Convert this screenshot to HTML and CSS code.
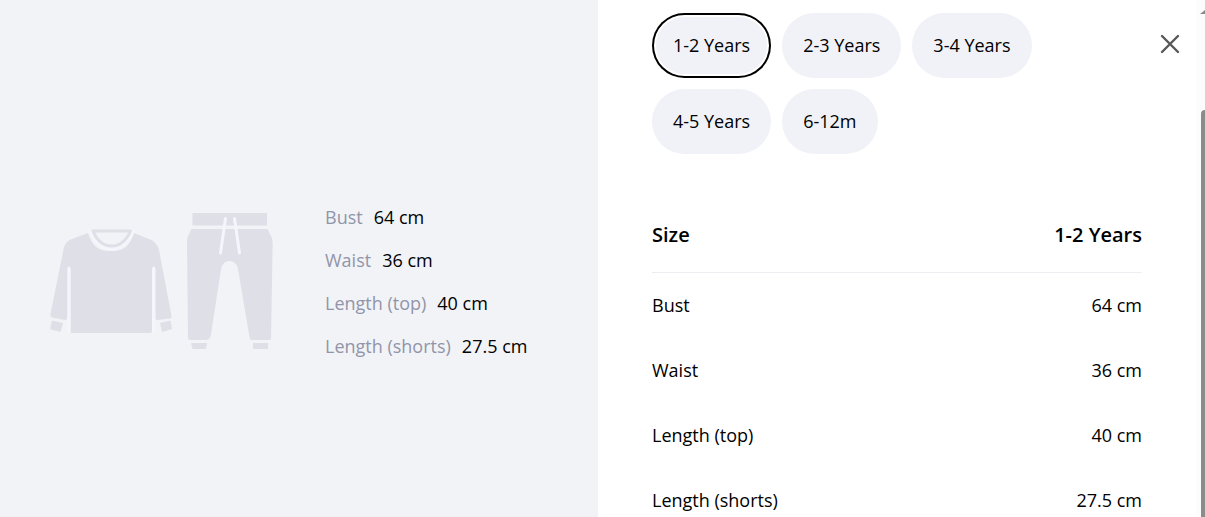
FILE: index.html
```html
<!DOCTYPE html>
<html lang="en">
<head>
<meta charset="utf-8">
<meta name="viewport" content="width=device-width, initial-scale=1">
<title>Size guide</title>
<link rel="stylesheet" href="styles.css">
</head>
<body>
<main class="guide">
  <section class="summary" aria-label="Measurements">
    <svg class="outfit" viewBox="50 212 223 138" aria-hidden="true">
      <!-- sweater -->
      <path class="fill" d="M88 233 C93 249 101 251 111 251 C121 251 129 249 134 233 L149 239 Q157 242 159 250 L171.500 316 Q172 318 170 318.500 L157 320 Q155.500 320 155.500 318 V269 Q154 267 152 269 V331 Q152 333 150 333 H72 Q70.500 333 70.500 331 V269 Q69 267 67.500 269 V317 Q67 320 65 320 L52 317.500 Q50 317 50.500 314 L64 247 Q66 241 72 239 Z"/>
      <path class="halo" d="M90.500 232 Q98 249 111 249 Q125 249 133 232"/>
      <path class="halo" d="M69 268 V331 M153.700 268 V331"/>
      <path class="collar" d="M93 231 H130.500 Q124 246 111.500 246 Q99 246 93 231 Z"/>
      <path class="fill" d="M52 320.500 L63 323 L60.500 332 L51 329.500 Q50 329 50.500 327 Z M160 323 L170.500 320.500 L172 329 L162 332 Z"/>
      <!-- trousers -->
      <path class="fill" d="M192.500 213 H267 V225.500 H192.500 Z"/>
      <path class="fill" d="M191.500 229 H267.500 L272 238 Q273 242 272.500 252 L271 338 Q271 340 269 340 H252 Q250 340 249.500 337 L238 269 Q236 261 229.500 261 Q223 261 221 269 L211 334 Q210 340 206 340 H190 Q188 340 188 337 L187 242 Q187 239 188 236 Z"/>
      <path class="halo" d="M225.500 218.500 L220.500 253 M234.500 218.500 L239.500 253"/>
      <path class="fill" d="M191 343 H207 L206 349 H192.500 Z M253 343 H268 V349 H253 Z"/>
    </svg>
    <dl class="facts">
      <div class="fact"><dt>Bust</dt><dd>64 cm</dd></div>
      <div class="fact"><dt>Waist</dt><dd>36 cm</dd></div>
      <div class="fact"><dt>Length (top)</dt><dd>40 cm</dd></div>
      <div class="fact"><dt>Length (shorts)</dt><dd>27.5 cm</dd></div>
    </dl>
  </section>
  <section class="details" aria-label="Sizes">
    <div class="sizes">
      <button class="size selected" type="button" aria-pressed="true">1-2 Years</button>
      <button class="size" type="button">2-3 Years</button>
      <button class="size" type="button">3-4 Years</button>
      <button class="size" type="button">4-5 Years</button>
      <button class="size" type="button">6-12m</button>
    </div>
    <table class="chart">
      <thead><tr><th scope="col">Size</th><th scope="col">1-2 Years</th></tr></thead>
      <tbody>
        <tr><td>Bust</td><td>64 cm</td></tr>
        <tr><td>Waist</td><td>36 cm</td></tr>
        <tr><td>Length (top)</td><td>40 cm</td></tr>
        <tr><td>Length (shorts)</td><td>27.5 cm</td></tr>
      </tbody>
    </table>
    <button class="close" type="button" aria-label="Close">
      <svg viewBox="0 0 20 20" width="20" height="20" aria-hidden="true"><path d="M2 2 L18 18 M18 2 L2 18"/></svg>
    </button>
  </section>
  <div class="track" aria-hidden="true">
    <svg class="arrow" viewBox="0 0 5 4" width="5" height="4"><path d="M5 0 V4 H0 Z"/></svg>
    <div class="thumb"></div>
  </div>
</main>
</body>
</html>
```
FILE: styles.css
```css
* { box-sizing: border-box; }

body {
  margin: 0;
  background: #fff;
  color: #000;
  font: 18px/24px "Open Sans", "Noto Sans", sans-serif;
}

button { font: inherit; color: inherit; border: 0; cursor: pointer; }

.guide {
  display: grid;
  grid-template-columns: 1fr 1fr 9px;
  grid-template-rows: 100%;
  height: 100vh;
  overflow: hidden;
}

.summary {
  display: flex;
  align-items: center;
  gap: 52px;
  padding: 45px 50px 0;
  background: #f1f3f7;
}

.outfit { flex: none; width: 223px; }
.fill { fill: #dedfe7; }
.halo { fill: none; stroke: #f5f6fb; stroke-width: 3; stroke-linecap: round; }
.collar { fill: #f1f3f7; stroke: #dedfe7; stroke-width: 3; stroke-linejoin: round; }

.facts { margin: 0; }
.fact { display: flex; gap: 11px; padding: 10px 0 9px; }
.fact dt { color: #9295a9; }
.fact dd { margin: 0; }

.details { position: relative; padding: 13px 54px 0; }

.sizes { display: flex; flex-wrap: wrap; gap: 11px; }
.size {
  padding: 20px 21px;
  border-radius: 33px;
  background: #f1f2f7;
  line-height: 25px;
}
.selected { box-shadow: inset 0 0 0 2px #000, inset 0 0 0 4px #fff; }

.chart { width: 100%; margin-top: 45px; border-collapse: collapse; }
.chart th { height: 73px; padding: 0; border-bottom: 1px solid #eeeef2; font-size: 20px; font-weight: 600; text-align: left; }
.chart td { height: 65px; padding: 0; }
.chart th:last-child, .chart td:last-child { text-align: right; }

.close {
  position: absolute;
  top: 34px;
  right: 16px;
  display: flex;
  padding: 0;
  background: none;
}
.close path { stroke: #58585b; stroke-width: 2.4; stroke-linecap: round; }

.track {
  display: flex;
  flex-direction: column;
  align-items: flex-end;
  gap: 96px;
  padding-top: 10px;
  background: #fcfcfc;
}
.arrow { flex: none; fill: #8b8b8b; }
.thumb { flex: 1; width: 4px; border-radius: 4px 0 0 0; background: #8b8b8b; }
```
